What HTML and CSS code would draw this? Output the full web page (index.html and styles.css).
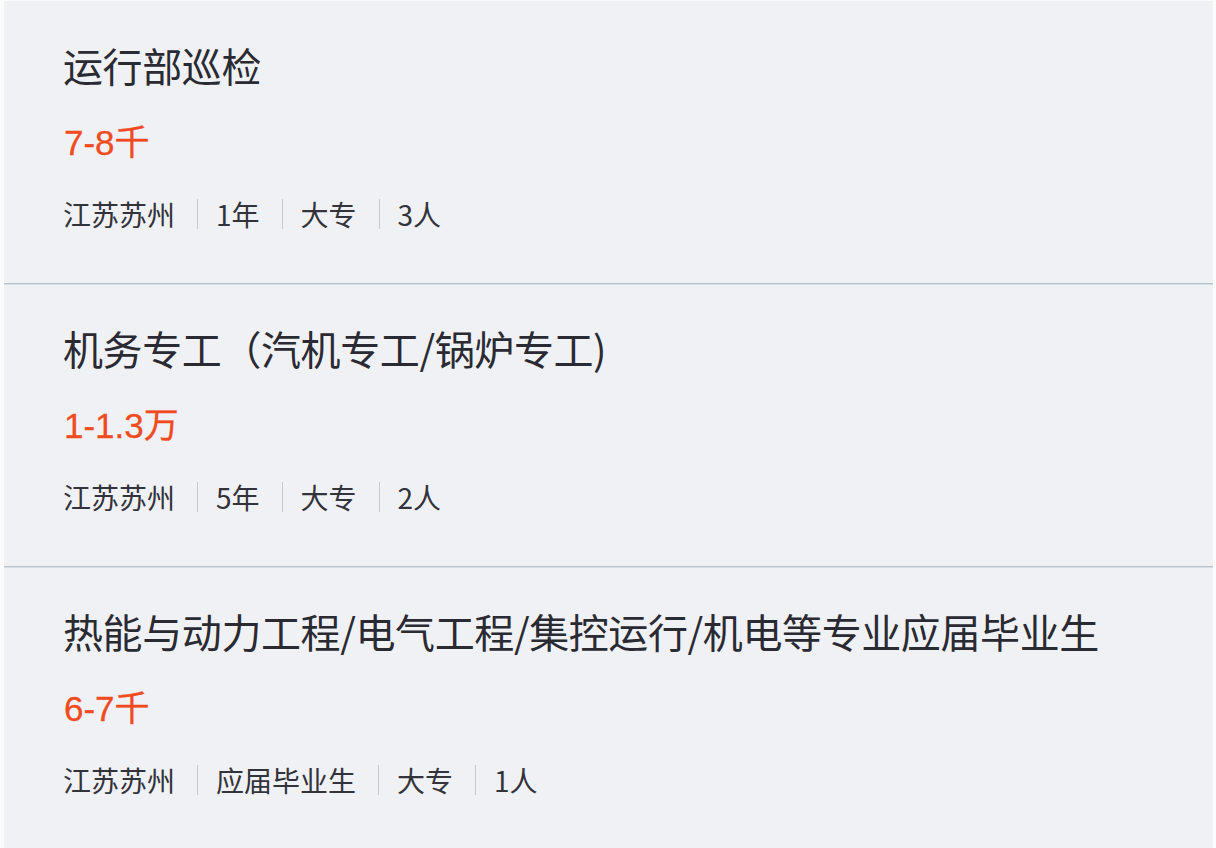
FILE: index.html
```html
<!DOCTYPE html>
<html lang="zh-CN">
<head>
<meta charset="utf-8">
<title>职位列表</title>
<link rel="stylesheet" href="styles.css">
</head>
<body>
<div class="list">
  <div class="job">
    <div class="title">运行部巡检</div>
    <div class="salary">7-8千</div>
    <div class="meta"><span>江苏苏州</span><i class="sep"></i><span>1年</span><i class="sep"></i><span>大专</span><i class="sep"></i><span>3人</span></div>
  </div>
  <div class="job">
    <div class="title">机务专工（汽机专工/锅炉专工)</div>
    <div class="salary">1-1.3万</div>
    <div class="meta"><span>江苏苏州</span><i class="sep"></i><span>5年</span><i class="sep"></i><span>大专</span><i class="sep"></i><span>2人</span></div>
  </div>
  <div class="job last">
    <div class="title">热能与动力工程/电气工程/集控运行/机电等专业应届毕业生</div>
    <div class="salary">6-7千</div>
    <div class="meta"><span>江苏苏州</span><i class="sep"></i><span>应届毕业生</span><i class="sep"></i><span>大专</span><i class="sep"></i><span>1人</span></div>
  </div>
</div>
</body>
</html>
```
FILE: styles.css
```css
html, body {
  margin: 0;
  padding: 0;
  background: #fbfbfc;
}
body {
  font-family: "Noto Sans CJK SC", "Liberation Sans", sans-serif;
  color: #2a2a33;
  height: 848px;
  overflow: hidden;
}
.list {
  margin: 1px 3px 0 4px;
  background: #f0f1f4;
  height: 847px;
}
.job {
  padding: 37px 0 0 59px;
  height: 283px;
  box-sizing: border-box;
  border-bottom: 1px solid #b8c2ce;
  box-shadow: 0 1px 0 #d9dee6;
}
.job.last {
  border-bottom: none;
  box-shadow: none;
}
.title {
  font-size: 40px;
  line-height: 54px;
  letter-spacing: -0.4px;
  color: #2a2a33;
}
.salary {
  margin-top: 27px;
  padding-left: 1px;
  font-size: 35px;
  line-height: 48px;
  color: #f04b1f;
  font-family: "Liberation Sans", "Noto Sans CJK SC", sans-serif;
  -webkit-text-stroke: 0.3px #f04b1f;
}
.meta {
  margin-top: 29px;
  display: flex;
  align-items: center;
  font-size: 28px;
  line-height: 36px;
  color: #33333b;
}
.sep {
  display: block;
  width: 1px;
  height: 30px;
  background: #c4c9d1;
  margin: 0 18px 0 22px;
}
```
